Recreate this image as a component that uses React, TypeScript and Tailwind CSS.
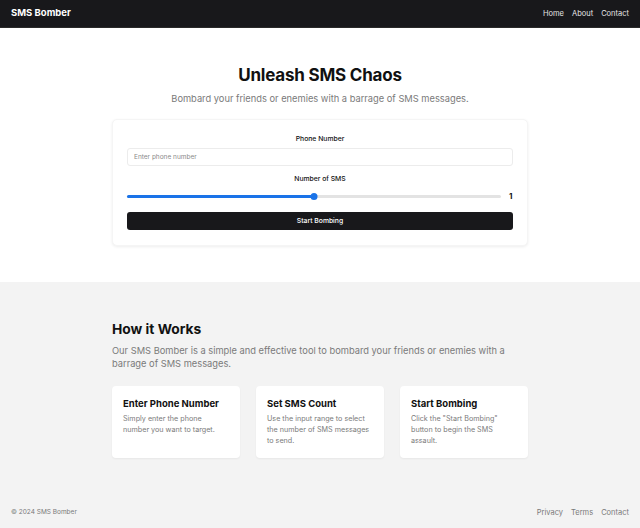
import { useState } from 'react';

const STEPS = [
  { title: 'Enter Phone Number', text: 'Simply enter the phone number you want to target.' },
  { title: 'Set SMS Count', text: 'Use the input range to select the number of SMS messages to send.' },
  { title: 'Start Bombing', text: 'Click the "Start Bombing" button to begin the SMS assault.' },
];

export default function App() {
  const [phone, setPhone] = useState('');
  const [count, setCount] = useState(50);

  return (
    <div className="min-h-[528px] flex flex-col bg-[#f3f3f3] font-['Inter',sans-serif] text-[#111]">
      {/* Header */}
      <header className="h-[28px] bg-[#18181b] flex items-center justify-between px-[11px] border-b border-[#2a2a2a]">
        <span className="text-white font-bold text-[9.5px]">SMS Bomber</span>
        <nav className="flex gap-[8px] text-[7.5px] text-[#e5e5e5]">
          <a>Home</a>
          <a>About</a>
          <a>Contact</a>
        </nav>
      </header>

      {/* Hero */}
      <section className="bg-white pt-[36px] pb-[36px] flex flex-col items-center">
        <h1 className="text-[17px] font-bold tracking-[-0.2px] leading-[22px]">Unleash SMS Chaos</h1>
        <p className="mt-[6px] text-[9.3px] text-[#7a7a7a] leading-[14px]">
          Bombard your friends or enemies with a barrage of SMS messages.
        </p>
        <div className="mt-[13px] w-[416px] rounded-[5px] bg-white shadow-[0_1px_3px_rgba(0,0,0,0.07)] border border-[#f5f5f5] px-[14px] pt-[14px] pb-[15px] flex flex-col">
          <label className="text-[6.8px] font-medium text-center leading-[10px]">Phone Number</label>
          <input
            value={phone}
            onChange={e => setPhone(e.target.value)}
            placeholder="Enter phone number"
            className="mt-[4px] h-[18px] rounded-[3px] border border-[#ececec] px-[6px] text-[6.5px] placeholder:text-[#8a8a8a] outline-none"
          />
          <label className="mt-[8px] text-[6.8px] font-medium text-center leading-[10px]">Number of SMS</label>
          <div className="mt-[6px] flex items-center gap-[8px]">
            <div className="relative flex-1 h-[6px] flex items-center">
              <div className="absolute left-0 right-0 h-[3px] rounded-full bg-[#e3e3e3]" />
              <div className="absolute left-0 h-[3px] rounded-full bg-[#1a73e8]" style={{ width: `${count}%` }} />
              <div className="absolute w-[7px] h-[7px] rounded-full bg-[#1a73e8] -translate-x-1/2" style={{ left: `${count}%` }} />
              <input
                type="range"
                min={0}
                max={100}
                value={count}
                onChange={e => setCount(Number(e.target.value))}
                className="absolute inset-0 w-full opacity-0"
              />
            </div>
            <span className="text-[8px] font-bold w-[4px]">1</span>
          </div>
          <button className="mt-[10px] h-[18px] rounded-[3px] bg-[#18181b] text-white text-[6.8px] font-medium">
            Start Bombing
          </button>
        </div>
      </section>

      {/* How it works */}
      <section className="flex-1 flex justify-center pt-[38px] pb-[39px]">
        <div className="w-[416px]">
          <h2 className="text-[13.8px] font-bold leading-[18px]">How it Works</h2>
          <p className="mt-[6px] text-[9.3px] leading-[13px] text-[#7a7a7a]">
            Our SMS Bomber is a simple and effective tool to bombard your friends or enemies with a barrage of SMS messages.
          </p>
          <div className="mt-[16px] grid grid-cols-3 gap-[16px]">
            {STEPS.map(s => (
              <div key={s.title} className="bg-white rounded-[4px] shadow-[0_1px_2px_rgba(0,0,0,0.05)] px-[11px] pt-[12px] pb-[12px] h-[72px]">
                <h3 className="text-[9.5px] font-bold leading-[12px]">{s.title}</h3>
                <p className="mt-[3px] text-[7.2px] leading-[11px] text-[#7a7a7a]">{s.text}</p>
              </div>
            ))}
          </div>
        </div>
      </section>

      {/* Footer */}
      <footer className="h-[30px] flex items-center justify-between px-[11px] text-[6.5px] text-[#7a7a7a]">
        <span>© 2024 SMS Bomber</span>
        <nav className="flex gap-[8px] text-[7.5px]">
          <a>Privacy</a>
          <a>Terms</a>
          <a>Contact</a>
        </nav>
      </footer>
    </div>
  );
}
